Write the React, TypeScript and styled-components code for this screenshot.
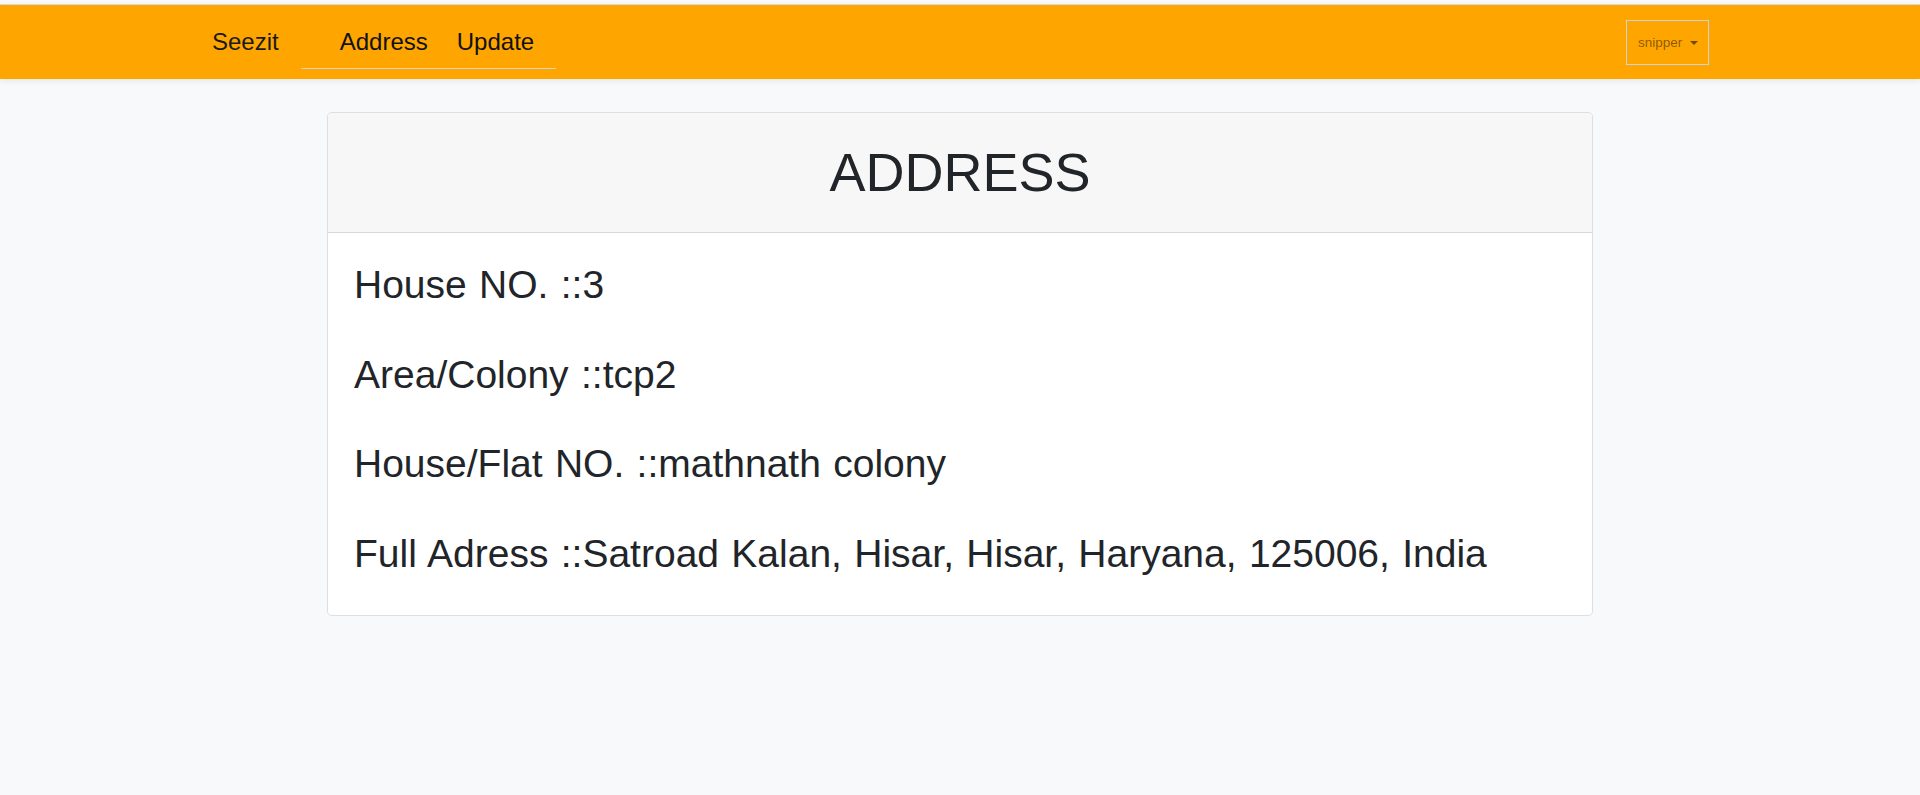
import React from 'react'
import styled, { createGlobalStyle } from 'styled-components'

const GlobalStyle = createGlobalStyle`
  html, body {
    margin: 0;
    padding: 0;
    background: #f8f9fa;
    font-family: 'Liberation Sans', Arial, sans-serif;
    color: #212529;
  }
`

const address = [
  { label: 'House NO.', value: '3' },
  { label: 'Area/Colony', value: 'tcp2' },
  { label: 'House/Flat NO.', value: 'mathnath colony' },
  { label: 'Full Adress', value: 'Satroad Kalan, Hisar, Hisar, Haryana, 125006, India' },
]

const App: React.FC = () => {
  return (
    <Page>
      <GlobalStyle />
      <Navbar>
        <NavLeft>
          <Brand>Seezit</Brand>
          <NavLinks>
            <NavLink>Address</NavLink>
            <NavLink>Update</NavLink>
          </NavLinks>
        </NavLeft>
        <UserButton>
          snipper
          <Caret />
        </UserButton>
      </Navbar>

      <Card>
        <CardHeader>
          <Title>ADDRESS</Title>
        </CardHeader>
        <CardBody>
          {address.map((row) => (
            <Row key={row.label}>
              {row.label} ::{row.value}
            </Row>
          ))}
        </CardBody>
      </Card>
    </Page>
  )
}

export default App

const Page = styled.div`
  min-height: 795px;
  padding-top: 4px;
  box-sizing: border-box;
`

const Navbar = styled.nav`
  height: 74px;
  background: #ffa500;
  border-top: 1px solid #d6d8db;
  box-shadow: 0 2px 6px rgba(0, 0, 0, 0.08);
  display: flex;
  justify-content: space-between;
  align-items: flex-start;
  padding: 0 211px 0 212px;
`

const NavLeft = styled.div`
  display: flex;
  align-items: flex-start;
  padding-top: 23px;
`

const Brand = styled.a`
  font-size: 24px;
  line-height: 28px;
  color: #1a1a1a;
  cursor: pointer;
`

const NavLinks = styled.ul`
  list-style: none;
  margin: 0 0 0 22px;
  padding: 0 22px 12px 39px;
  display: flex;
  column-gap: 29px;
  border-bottom: 1px solid #d4d4d4;
`

const NavLink = styled.li`
  font-size: 24px;
  line-height: 28px;
  color: #111;
  cursor: pointer;
`

const UserButton = styled.button`
  margin-top: 15px;
  width: 83px;
  height: 45px;
  box-sizing: border-box;
  border: 1px solid #d0d3d6;
  background: transparent;
  padding: 0 11px;
  display: flex;
  align-items: center;
  justify-content: space-between;
  font-family: 'Liberation Sans', Arial, sans-serif;
  font-size: 13.5px;
  color: rgba(0, 0, 0, 0.48);
  cursor: pointer;
`

const Caret = styled.span`
  width: 0;
  height: 0;
  border-left: 4px solid transparent;
  border-right: 4px solid transparent;
  border-top: 4.5px solid rgba(0, 0, 0, 0.55);
  margin-left: 8px;
`

const Card = styled.section`
  width: 1266px;
  box-sizing: border-box;
  margin: 33px auto 0;
  background: #fff;
  border: 1px solid rgba(0, 0, 0, 0.125);
  border-radius: 5px;
  overflow: hidden;
`

const CardHeader = styled.header`
  height: 119px;
  background: #f7f7f7;
  border-bottom: 1px solid rgba(0, 0, 0, 0.125);
  display: flex;
  align-items: center;
  justify-content: center;
`

const Title = styled.h1`
  margin: 0;
  font-size: 54px;
  font-weight: 400;
  line-height: 1.2;
  color: #212529;
`

const CardBody = styled.div`
  padding: 29px 24px 38px 26px;
  display: flex;
  flex-direction: column;
  row-gap: 43.5px;
`

const Row = styled.p`
  margin: 0;
  font-size: 39px;
  line-height: 46px;
  word-spacing: 1.5px;
  color: #212529;
`
